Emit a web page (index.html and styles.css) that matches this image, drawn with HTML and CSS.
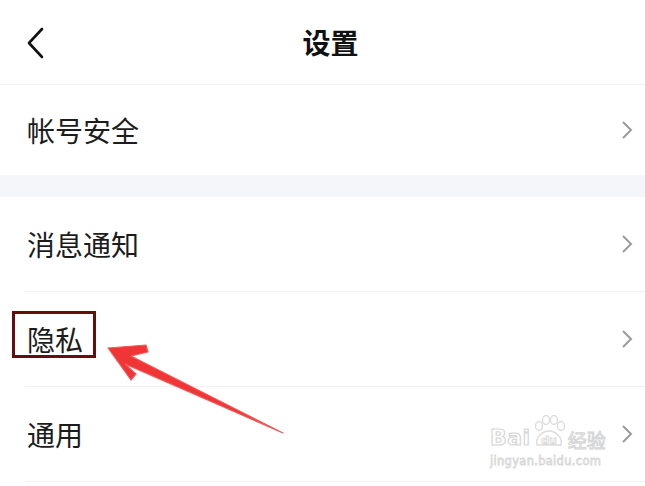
FILE: index.html
```html
<!DOCTYPE html>
<html lang="zh-CN">
<head>
<meta charset="utf-8">
<title>设置</title>
<link rel="stylesheet" href="styles.css">
</head>
<body>
<div class="page">
  <header class="topbar">
    <div class="back">
      <svg width="20" height="32" viewBox="0 0 20 32"><path d="M16 2 L3 16 L16 30" fill="none" stroke="#111" stroke-width="2.6" stroke-linecap="round" stroke-linejoin="round"/></svg>
    </div>
    <h1 class="title">设置</h1>
    <div class="spacer"></div>
  </header>

  <section class="group first">
    <div class="row solo">
      <span class="label">帐号安全</span>
      <svg class="chev" width="12" height="20" viewBox="0 0 12 20"><path d="M2 2 L10 10 L2 18" fill="none" stroke="#9b9b9b" stroke-width="2"/></svg>
    </div>
  </section>

  <div class="band"></div>

  <section class="group">
    <div class="row">
      <span class="label">消息通知</span>
      <svg class="chev" width="12" height="20" viewBox="0 0 12 20"><path d="M2 2 L10 10 L2 18" fill="none" stroke="#9b9b9b" stroke-width="2"/></svg>
    </div>
    <div class="row">
      <span class="label marked">隐私<span class="mark"></span></span>
      <svg class="chev" width="12" height="20" viewBox="0 0 12 20"><path d="M2 2 L10 10 L2 18" fill="none" stroke="#9b9b9b" stroke-width="2"/></svg>
    </div>
    <div class="row">
      <span class="label">通用</span>
      <svg class="chev" width="12" height="20" viewBox="0 0 12 20"><path d="M2 2 L10 10 L2 18" fill="none" stroke="#9b9b9b" stroke-width="2"/></svg>
    </div>
  </section>

  <svg class="arrow" width="645" height="486" viewBox="0 0 645 486">
    <polygon points="108,348 146,345 148,352 131,356 283,433 125,364 136,374 131,380" fill="#ef3535" stroke="#f25a5a" stroke-width="1.2" stroke-linejoin="round"/>
  </svg>

  <div class="watermark">
    <div class="wm-top">
      <span class="wm-bai">Bai</span>
      <span class="wm-paw">
        <svg width="36" height="34" viewBox="0 0 36 34">
          <g fill="none" stroke="#dcdcdc" stroke-width="1.4">
            <ellipse cx="8" cy="11" rx="3.5" ry="4.5"/>
            <ellipse cx="15" cy="5" rx="3.5" ry="4.5"/>
            <ellipse cx="23" cy="5" rx="3.5" ry="4.5"/>
            <ellipse cx="30" cy="11" rx="3.5" ry="4.5"/>
            <path d="M6 30 C4 22 12 16 18 16 C24 16 32 22 30 30 Z"/>
          </g>
          <text x="18" y="29" text-anchor="middle" class="wm-du">du</text>
        </svg>
      </span>
      <span class="wm-jy">经验</span>
    </div>
    <div class="wm-url">jingyan.baidu.com</div>
  </div>
</div>
</body>
</html>
```

FILE: styles.css
```css
* { box-sizing: border-box; margin: 0; padding: 0; }
html, body { background: #fff; }
body {
  margin: 0;
  font-family: "Noto Sans CJK SC", "Noto Sans", sans-serif;
  color: #1c1c1c;
}
.page {
  position: relative;
  width: 645px;
  height: 486px;
  overflow: hidden;
  background: #fff;
}
.topbar {
  height: 85px;
  display: grid;
  grid-template-columns: 1fr auto 1fr;
  align-items: center;
  padding-left: 16px;
  border-bottom: 1px solid #f3f3f3;
}
.back {
  display: flex;
  align-items: center;
  padding-left: 10px;
  padding-top: 1px;
}
.back svg { display: block; }
.title {
  font-size: 28px;
  font-weight: 700;
  line-height: 1;
  color: #111;
  letter-spacing: 0;
}
.group { background: #fff; }
.row {
  height: 95px;
  margin-left: 25px;
  padding: 0 12px 0 2px;
  display: flex;
  align-items: center;
  justify-content: space-between;
  border-bottom: 1px solid #f1f1f1;
}
.row.solo {
  height: 90px;
  border-bottom: none;
}
.label {
  font-size: 28px;
  line-height: 1;
  color: #1c1c1c;
}
.label.marked { position: relative; }
.mark {
  position: absolute;
  left: -15px;
  right: -13px;
  top: -14px;
  bottom: -5px;
  border: 3px solid #6a0c0c;
}
.chev { display: block; }
.band {
  height: 22px;
  background: #f5f6fa;
}
.arrow {
  position: absolute;
  left: 0;
  top: 0;
  pointer-events: none;
}
.watermark {
  position: absolute;
  left: 490px;
  top: 412px;
  width: 122px;
  color: #dedede;
  font-family: "DejaVu Sans", sans-serif;
}
.wm-top {
  display: flex;
  align-items: flex-end;
  height: 37px;
}
.wm-bai {
  font-size: 22px;
  font-weight: 700;
  line-height: 1;
  color: #fff;
  -webkit-text-stroke: 1.2px #d6d6d6;
  letter-spacing: 0.5px;
}
.wm-paw svg { display: block; }
.wm-du {
  font-family: "DejaVu Sans", sans-serif;
  font-size: 11px;
  font-weight: 700;
  fill: #fff;
  stroke: #d6d6d6;
  stroke-width: 0.8;
}
.wm-jy {
  font-family: "Noto Sans CJK SC", sans-serif;
  font-size: 19px;
  line-height: 1;
  color: #fff;
  -webkit-text-stroke: 1px #d4d4d4;
  margin-left: 1px;
}
.wm-url {
  font-size: 11.5px;
  line-height: 1;
  margin-top: 7px;
  color: #fff;
  -webkit-text-stroke: 0.8px #d6d6d6;
  letter-spacing: 0.3px;
}
```
